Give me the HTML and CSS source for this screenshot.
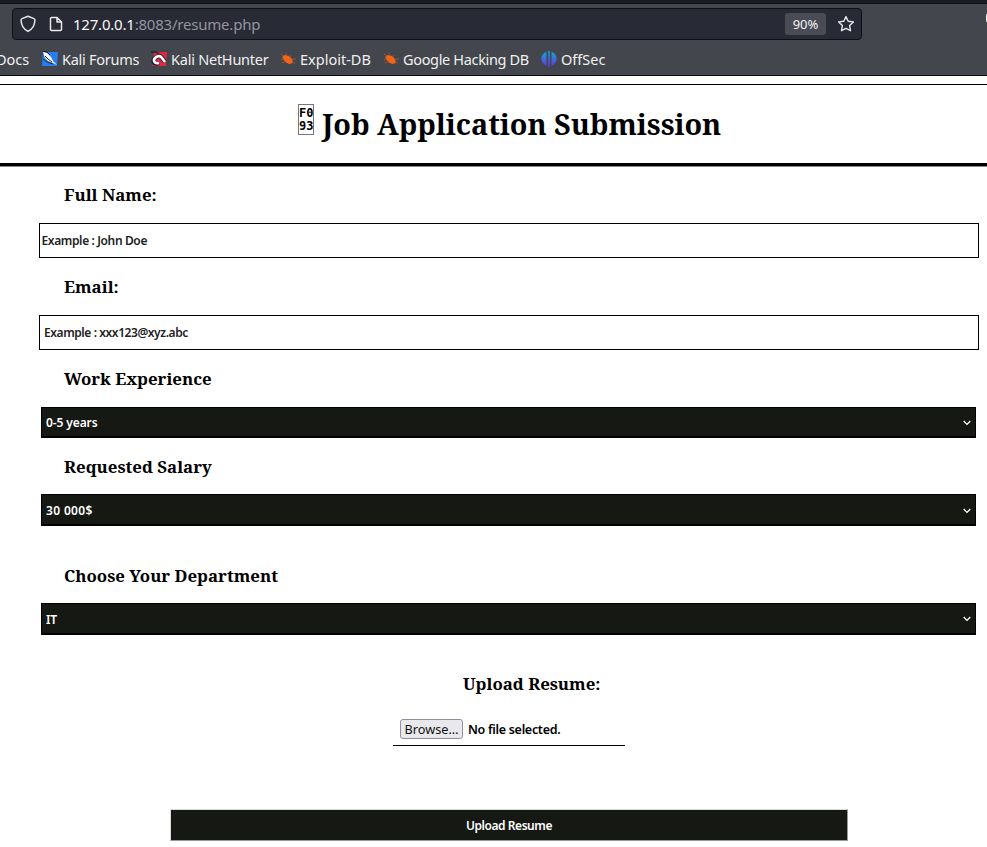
FILE: index.html
```html
<!DOCTYPE html>
<html lang="en">
<head>
<meta charset="utf-8">
<title>Job Application Submission</title>
<link rel="stylesheet" href="styles.css">
</head>
<body>
<header class="browser">
  <div class="nav">
    <div class="urlbar">
      <svg class="shield" width="16" height="18" viewBox="0 0 16 18"><path d="M8 1.200 14 3.600Q15 4 14.900 5.200C14.700 10.500 12.600 14 8 16.400 3.400 14 1.300 10.500 1.100 5.200Q1 4 2 3.600Z" fill="none" stroke="#e8e8ea" stroke-width="1.500" stroke-linejoin="round"/></svg>
      <svg class="page-icon" width="14" height="16" viewBox="0 0 14 16"><path d="M2.500 1.500H8L12.500 6V13.500Q12.500 14.500 11.500 14.500H2.500Q1.500 14.500 1.500 13.500V2.500Q1.500 1.500 2.500 1.500ZM8 1.500V6H12.500" fill="none" stroke="#e8e8ea" stroke-width="1.500" stroke-linejoin="round"/></svg>
      <span class="url"><b>127.0.0.1</b>:8083/resume.php</span>
      <span class="zoom">90%</span>
      <svg class="star" width="18" height="18" viewBox="0 0 18 18"><path d="M9 1.600 11.200 6.200 16.400 6.900 12.600 10.500 13.500 15.700 9 13.300 4.500 15.700 5.400 10.500 1.600 6.900 6.800 6.200Z" fill="none" stroke="#e8e8ea" stroke-width="1.400" stroke-linejoin="round"/></svg>
    </div>
    <span class="ext"></span>
  </div>
  <nav class="bookmarks">
    <span class="bm docs">Docs</span>
    <span class="bm forums"><svg width="16" height="16" viewBox="0 0 16 16"><path d="M1 1H16L15 15H0Z" fill="#287df0"/><path d="M1 1 5 2 9 6 11 10 15 14 11 12 6 10 3 7Z" fill="#fff"/><path d="M0 0 5 1 8 4M3 5 6 8 10 11M1 8 5 11 11 13" fill="none" stroke="#20242c"/></svg><span>Kali Forums</span></span>
    <span class="bm hunter"><svg width="16" height="16" viewBox="0 0 16 16"><path d="M3 1H16L15 15H1Z" fill="#e02840"/><path d="M0 1 5 1 8 3M1 11 3 14" stroke="#20242c" stroke-width="1.500" fill="none"/><path d="M8 12C3 14 1 9 4 7S9 4 11 7L14 11" fill="none" stroke="#20242c" stroke-width="4.500"/><path d="M8 12C3 13 2 9 4 7S9 4 11 7L14 11" fill="none" stroke="#fff" stroke-width="2.600"/></svg><span>Kali NetHunter</span></span>
    <span class="bm exploit"><svg width="16" height="14" viewBox="0 0 16 14"><path d="M2 5 5 3 9 4 12 7 13 11 9 12 5 10Z" fill="#f26516"/><path d="M1 2 4 4M6 1 7 4M11 3 10 5M12 7H16M1 8 4 7M2 11 6 9M12 10 15 11" stroke="#9e542e" fill="none"/></svg><span>Exploit-DB</span></span>
    <span class="bm google"><svg width="16" height="14" viewBox="0 0 16 14"><path d="M2 5 5 3 9 4 12 7 13 11 9 12 5 10Z" fill="#f26516"/><path d="M1 2 4 4M6 1 7 4M11 3 10 5M12 7H16M1 8 4 7M2 11 6 9M12 10 15 11" stroke="#9e542e" fill="none"/></svg><span>Google Hacking DB</span></span>
    <span class="bm offsec"><svg width="16" height="16" viewBox="0 0 16 16"><defs><linearGradient id="g" x2="0" y2="1"><stop stop-color="#11a9d0"/><stop offset="1" stop-color="#6732e8"/></linearGradient></defs><path d="M5.500.700V14.800C-1.300 12 -1.300 3 5.500.700ZM7.200 0H8.800V16H7.200ZM10.500.700C17.300 3 17.300 12 10.500 14.800Z" fill="url(#g)"/></svg><span>OffSec</span></span>
  </nav>
</header>
<main>
  <div class="title">
    <span class="missing"><span>F0</span><span>93</span></span>
    <h1>Job Application Submission</h1>
  </div>
  <form>
    <label class="l-name"><span>Full Name:</span></label>
    <div class="input name"><span>Example : John Doe</span></div>
    <label class="l-email"><span>Email:</span></label>
    <div class="input email"><span>Example : xxx123@xyz.abc</span></div>
    <label class="l-work"><span>Work Experience</span></label>
    <div class="select work"><span>0-5 years</span><svg width="8" height="6" viewBox="0 0 8 6"><path d="M.700 1 4 4.400 7.300 1" fill="none" stroke="#fff" stroke-width="1.300"/></svg></div>
    <label class="l-salary"><span>Requested Salary</span></label>
    <div class="select salary"><span>30 000$</span><svg width="8" height="6" viewBox="0 0 8 6"><path d="M.700 1 4 4.400 7.300 1" fill="none" stroke="#fff" stroke-width="1.300"/></svg></div>
    <label class="l-dept"><span>Choose Your Department</span></label>
    <div class="select dept"><span>IT</span><svg width="8" height="6" viewBox="0 0 8 6"><path d="M.700 1 4 4.400 7.300 1" fill="none" stroke="#fff" stroke-width="1.300"/></svg></div>
    <label class="l-upload"><span>Upload Resume:</span></label>
    <div class="file"><button type="button">Browse…</button><span>No file selected.</span></div>
    <button class="submit" type="button"><span>Upload Resume</span></button>
  </form>
</main>
</body>
</html>
```
FILE: styles.css
```css
* { box-sizing: border-box; }
body { margin: 0; height: 847px; overflow: hidden; background: #fff; color: #000; font-family: "Noto Sans", sans-serif; }
svg { display: block; flex: none; }
.browser { height: 76px; background: #43464d; border-top: 3px solid #1b1c21; border-bottom: 1px solid #08080d; overflow: hidden; }
.nav { height: 40px; display: flex; padding: 4px 0 4px 12px; justify-content: space-between; border-top: 1px solid #101116; }
.urlbar { width: 850px; height: 32px; display: flex; align-items: center; background: #282a36; border: 1px solid #0e0f14; border-radius: 4px; padding: 0 6px 0 7px; }
.page-icon { margin-left: 13px; }
.url { margin-left: 10px; font-size: 15px; line-height: 24px; letter-spacing: -0.210px; color: #94959b; white-space: nowrap; }
.url b { font-weight: 400; color: #f8f8f8; }
.zoom { margin-left: auto; width: 41px; height: 22px; border-radius: 3px; background: #494c55; color: #f2f2f2; font-size: 13px; line-height: 22px; text-align: center; }
.star { margin-left: 11px; }
.ext { width: 8px; height: 10px; margin: 5px -7px 0 0; border-radius: 3px; background: #eee; }
.bookmarks { height: 31px; display: flex; align-items: center; color: #f0f0f1; font-size: 14.500px; white-space: nowrap; }
.bm { display: flex; align-items: center; gap: 4px; flex: none; }
.docs { width: 42px; margin-left: -4px; margin-right: 4px; }
.forums { width: 109px; letter-spacing: -0.270px; }
.hunter { width: 129px; letter-spacing: -0.240px; }
.exploit { width: 103px; }
.google { width: 158px; letter-spacing: -0.340px; }
main { display: block; margin-top: 8px; }
.title { height: 82px; display: flex; align-items: flex-start; padding: 19px 0 0 298px; border-top: 1px solid #000; border-bottom: 3px solid #000; box-shadow: 0 1px #888; }
.missing { width: 16px; height: 31px; border: 1px solid #777; display: flex; flex-direction: column; padding-top: 2px; font: bold 12px/13px "DejaVu Sans Mono", monospace; }
h1 { margin: 0 0 0 8px; font: bold 28.800px/40px "Noto Serif", "DejaVu Serif Condensed", "DejaVu Serif", serif; letter-spacing: -0.060px; white-space: nowrap; }
form { display: flex; flex-direction: column; padding: 17px 0 0 41px; }
label { display: block; height: 24px; margin: 0 0 16px 23px; font: bold 16.850px/24px "Noto Serif", "DejaVu Serif Condensed", "DejaVu Serif", serif; }
.input { width: 940px; height: 35px; margin: 0 0 17px -2px; padding-left: 1.500px; border: 1px solid #000; font-size: 12px; font-weight: 600; letter-spacing: -0.370px; line-height: 34px; color: #222; }
.email { padding-left: 4px; letter-spacing: -0.420px; }
.select { width: 935px; height: 32px; display: flex; align-items: center; justify-content: space-between; padding: 1px 4px 0; background: #161814; border: 1px solid #000; border-bottom-width: 2px; color: #fff; font-size: 12px; font-weight: 600; }
.work { height: 31px; margin-bottom: 17px; letter-spacing: -0.100px; }
.l-salary { margin-bottom: 15px; }
.salary { margin-bottom: 38px; padding-top: 2px; letter-spacing: 0.350px; }
.l-dept { margin-bottom: 15px; }
.dept { margin-bottom: 37px; letter-spacing: -0.300px; }
.l-upload { margin: 0 0 22px 422px; }
.file { width: 232px; height: 28px; margin-left: 352px; padding: 1px 7px 0; display: flex; align-items: flex-start; gap: 5px; border-bottom: 1px solid #000; font-size: 12.500px; font-weight: 600; letter-spacing: -0.300px; line-height: 22px; white-space: nowrap; }
.file button { width: 63px; height: 20px; padding: 0; background: #e9e9ed; border: 1px solid #8f8f9d; border-radius: 3px; color: #111; font: 12.700px/19px "Noto Sans", sans-serif; }
.submit { width: 678px; height: 32px; margin: 63px 0 0 129px; padding: 2px 0 0; background: #161814; border: 1px solid #999; border-top-color: #d8dcd8; border-left-color: #d8dcd8; color: #fff; font: 600 12px/28px "Noto Sans", sans-serif; letter-spacing: -0.450px; }
```
